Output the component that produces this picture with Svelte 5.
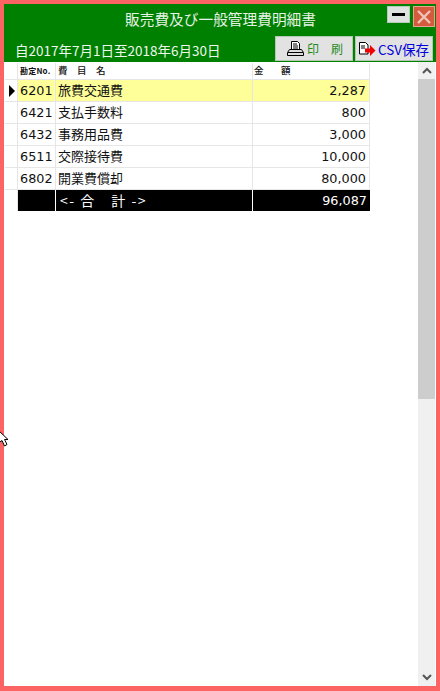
<script>
  const rows = [
    { code: '6201', name: '旅費交通費', amount: '2,287' },
    { code: '6421', name: '支払手数料', amount: '800' },
    { code: '6432', name: '事務用品費', amount: '3,000' },
    { code: '6511', name: '交際接待費', amount: '10,000' },
    { code: '6802', name: '開業費償却', amount: '80,000' }
  ];
</script>

<div class="window">
  <header class="head">
    <div class="title-row">
      <h1>販売費及び一般管理費明細書</h1>
      <div class="win-buttons">
        <button class="min" aria-label="minimize"><span></span></button>
        <button class="close" aria-label="close">
          <svg width="18" height="18" viewBox="0 0 18 18">
            <path d="M3 3l12 12M15 3L3 15" stroke="#ecc4b8" stroke-width="2.4" fill="none" />
          </svg>
        </button>
      </div>
    </div>
    <div class="tool-row">
      <span class="period">自2017年7月1日至2018年6月30日</span>
      <div class="tools">
        <button class="tool print">
          <svg width="17" height="17" viewBox="0 0 17 17">
            <path d="M4.500 1.500h6l2 2v6h-8z" fill="#fff" stroke="#000" />
            <path d="M6 4h4M6 6h5M6 8h5" stroke="#000" />
            <path d="M2.500 9.500h12l2 3v3h-16v-3z" fill="#ddd" stroke="#000" />
            <path d="M1 12.500h15" stroke="#000" />
          </svg>
          <span>印　刷</span>
        </button>
        <button class="tool csv">
          <svg width="18" height="16" viewBox="0 0 18 16">
            <path d="M1.500 1.500h6l2.500 2.500v9h-8.500z" fill="#fff" stroke="#000" />
            <path d="M3 5h4M3 7h4" stroke="#000" />
            <path d="M7 7.500h5V4l5.500 5.500L12 15v-3.500H7z" fill="#f00000" />
          </svg>
          <span>CSV保存</span>
        </button>
      </div>
    </div>
  </header>

  <div class="body">
    <div class="grid">
      <div class="row header">
        <div class="mark"></div>
        <div class="code">勘定No.</div>
        <div class="name">費　目　名</div>
        <div class="amount">金　　額</div>
      </div>
      {#each rows as row, i}
        <div class="row" class:current={i === 0}>
          <div class="mark">{#if i === 0}<i class="arrow"></i>{/if}</div>
          <div class="code">{row.code}</div>
          <div class="name">{row.name}</div>
          <div class="amount">{row.amount}</div>
        </div>
      {/each}
      <div class="row total">
        <div class="mark"></div>
        <div class="code"></div>
        <div class="name">&lt;- 合　計 -&gt;</div>
        <div class="amount">96,087</div>
      </div>
    </div>

    <div class="scrollbar">
      <div class="sb-btn">
        <svg width="10" height="7" viewBox="0 0 10 7"><path d="M1 6l4-4 4 4" stroke="#555" stroke-width="2" fill="none" /></svg>
      </div>
      <div class="thumb"></div>
      <div class="track"></div>
      <div class="sb-btn">
        <svg width="10" height="7" viewBox="0 0 10 7"><path d="M1 1l4 4 4-4" stroke="#555" stroke-width="2" fill="none" /></svg>
      </div>
    </div>
  </div>

  <svg class="cursor" width="9" height="18" viewBox="0 0 9 18">
    <path d="M-3 0L8 10.500H4.500L7 15.500L4.500 17L2 11.500L-3 15z" fill="#fff" stroke="#000" />
  </svg>
</div>

<style>
  :global(body) {
    margin: 0;
    background: #fc6464;
  }
  .window {
    position: relative;
    box-sizing: border-box;
    width: 440px;
    height: 691px;
    padding: 4px 4px 5px 4px;
    display: flex;
    flex-direction: column;
    background: #fc6464;
    font-family: "Noto Sans CJK JP", "Liberation Sans", sans-serif;
    overflow: hidden;
  }
  .head {
    height: 58px;
    flex: none;
    background: #008000;
    color: #fff;
    display: flex;
    flex-direction: column;
  }
  .title-row {
    position: relative;
    height: 32px;
    flex: none;
  }
  h1 {
    margin: 0;
    padding-top: 4px;
    padding-left: 1px;
    text-align: center;
    font-size: 14.700px;
    line-height: 22px;
    font-weight: 400;
    color: #e6f2e6;
  }
  .win-buttons {
    position: absolute;
    top: 2px;
    right: 1px;
    display: flex;
    align-items: flex-start;
    gap: 3px;
  }
  .win-buttons button {
    padding: 0;
    width: 23px;
    height: 17px;
    border: none;
    display: flex;
    align-items: center;
    justify-content: center;
  }
  .min {
    background: #dfe3df;
    box-shadow: inset 0 0 0 1px #b9c9b9;
  }
  .min span {
    width: 13px;
    height: 3px;
    background: #000;
  }
  .win-buttons .close {
    width: 22px;
    height: 21px;
    background: #d65a3e;
    box-shadow: inset 0 0 0 1px #e9a48f;
  }
  .tool-row {
    display: flex;
    align-items: flex-start;
    justify-content: space-between;
    padding: 0 3px 0 11px;
  }
  .period {
    font-size: 13.500px;
    line-height: 20px;
    margin-top: 4px;
    color: #eef6ee;
  }
  .tools {
    display: flex;
    gap: 2px;
  }
  .tool {
    height: 25px;
    padding: 0;
    border: 1px solid #b4c8b4;
    background: #e2e2e2;
    display: flex;
    align-items: center;
    justify-content: center;
    font-family: inherit;
    font-size: 12px;
  }
  .print {
    width: 78px;
    gap: 3px;
    color: #1f8a1f;
    padding-left: 2px;
  }
  .csv {
    width: 78px;
    gap: 2px;
    color: #0000d8;
    justify-content: flex-start;
    padding-left: 2px;
    font-size: 13.500px;
    white-space: nowrap;
  }
  .body {
    flex: 1;
    display: flex;
    justify-content: space-between;
    background: #fff;
    min-height: 0;
    padding-left: 1px;
  }
  .grid {
    width: 365px;
    padding-top: 1px;
    font-size: 13px;
    color: #111;
  }
  .row {
    display: grid;
    grid-template-columns: 13px 38px 197px 117px;
    height: 22px;
    box-sizing: border-box;
    border-bottom: 1px solid #e6e6e6;
    line-height: 21px;
  }
  .row > div {
    border-right: 1px solid #e6e6e6;
    box-sizing: border-box;
    white-space: nowrap;
    overflow: hidden;
  }
  .mark {
    position: relative;
  }
  .arrow {
    position: absolute;
    left: 4px;
    top: 5px;
    border-left: 6px solid #000;
    border-top: 6px solid transparent;
    border-bottom: 6px solid transparent;
  }
  .code {
    padding-left: 2px;
    font-family: "DejaVu Sans", sans-serif;
    font-size: 12.800px;
  }
  .name {
    padding-left: 2px;
    line-height: 19px;
  }
  .amount {
    text-align: right;
    padding-right: 3px;
    font-family: "DejaVu Sans", sans-serif;
    font-size: 12.800px;
  }
  .header {
    height: 17px;
    line-height: 15px;
    font-size: 8px;
    font-weight: 700;
  }
  .header .code {
    font-family: inherit;
    font-size: 8px;
    padding-left: 2px;
    letter-spacing: 0.2px;
  }
  .header .name {
    font-size: 9.500px;
    padding-left: 2px;
    font-weight: 500;
    line-height: 15px;
  }
  .header .amount {
    text-align: left;
    font-family: inherit;
    font-size: 9.500px;
    font-weight: 500;
    padding-left: 1px;
    letter-spacing: -0.5px;
  }
  .current .code,
  .current .name,
  .current .amount {
    background: #ffff99;
  }
  .total {
    height: 21px;
    color: #fff;
    border-bottom: none;
  }
  .total .code,
  .total .name,
  .total .amount {
    background: #000;
    border-right-color: #fff;
  }
  .total .amount {
    border-right: none;
  }
  .total .name {
    padding-left: 4px;
    letter-spacing: 1.500px;
    font-size: 14px;
    line-height: 20px;
  }
  .scrollbar {
    width: 17px;
    margin-right: 1px;
    flex: none;
    display: flex;
    flex-direction: column;
    background: #f0f0f0;
  }
  .sb-btn {
    height: 17px;
    flex: none;
    display: flex;
    align-items: center;
    justify-content: center;
  }
  .thumb {
    height: 320px;
    flex: none;
    background: #cdcdcd;
  }
  .track {
    flex: 1;
  }
  .cursor {
    position: absolute;
    left: 0;
    top: 429px;
  }
</style>
